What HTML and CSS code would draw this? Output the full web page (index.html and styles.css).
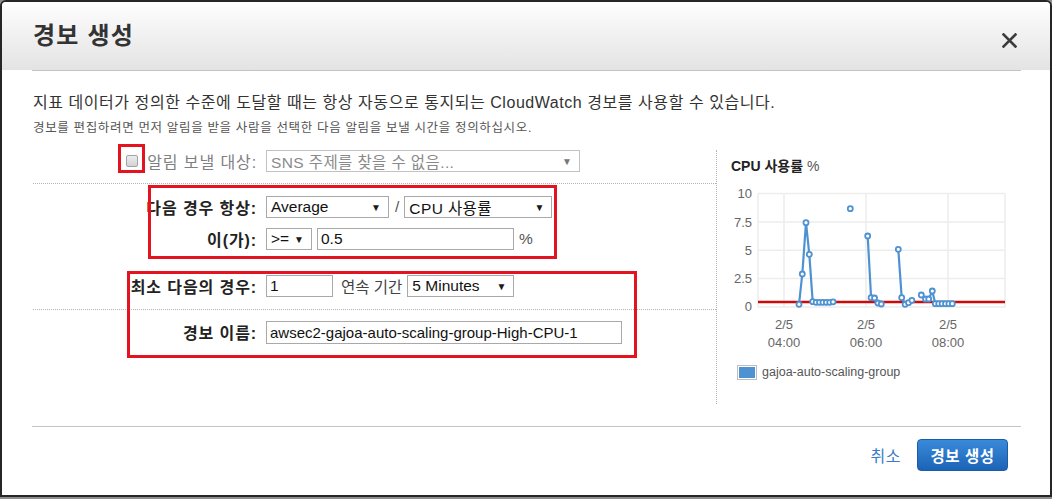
FILE: index.html
```html
<!DOCTYPE html>
<html lang="ko">
<head>
<meta charset="utf-8">
<title>경보 생성</title>
<link rel="stylesheet" href="styles.css">
</head>
<body>
<div class="modal">
  <header class="head">
    <h1 class="title">경보 생성</h1>
    <svg class="close" width="15" height="15" viewBox="0 0 15 15" aria-label="닫기"><path d="M1.5 1.5L13.5 13.5M13.5 1.5L1.5 13.5" stroke="#3c3c3c" stroke-width="2.6" stroke-linecap="square" fill="none"/></svg>
  </header>
  <div class="rule"></div>
  <div class="content">
    <p class="lead">지표 데이터가 정의한 수준에 도달할 때는 항상 자동으로 통지되는 CloudWatch 경보를 사용할 수 있습니다.</p>
    <p class="hint">경보를 편집하려면 먼저 알림을 받을 사람을 선택한 다음 알림을 보낼 시간을 정의하십시오.</p>
    <div class="main">
      <div class="form">
        <div class="sec sec1">
          <div class="row">
            <div class="lbl lbl-dis"><span class="chk"></span>알림 보낼 대상:</div>
            <div class="ctl"><span class="sel sel-dis w-sns"><span class="ko">SNS 주제를 찾을 수 없음...</span><i>▼</i></span></div>
          </div>
        </div>
        <div class="sec sec2">
          <div class="row">
            <div class="lbl">다음 경우 항상:</div>
            <div class="ctl">
              <span class="sel w-avg"><span>Average</span><i>▼</i></span>
              <span class="sep">/</span>
              <span class="sel w-cpu"><span class="ko">CPU 사용률</span><i>▼</i></span>
            </div>
          </div>
          <div class="row">
            <div class="lbl">이(가):</div>
            <div class="ctl">
              <span class="sel w-op"><span>&gt;=</span><i>▼</i></span>
              <input class="inp w-val" type="text" value="0.5">
              <span class="unit">%</span>
            </div>
          </div>
          <div class="row r4">
            <div class="lbl">최소 다음의 경우:</div>
            <div class="ctl">
              <input class="inp w-n" type="text" value="1">
              <span class="txt">연속 기간</span>
              <span class="sel w-min"><span>5 Minutes</span><i>▼</i></span>
            </div>
          </div>
        </div>
        <div class="sec sec3">
          <div class="row">
            <div class="lbl">경보 이름:</div>
            <div class="ctl"><input class="inp w-name" type="text" value="awsec2-gajoa-auto-scaling-group-High-CPU-1"></div>
          </div>
        </div>
        <div class="mark m1"></div>
        <div class="mark m2"></div>
        <div class="mark m3"></div>
      </div>
      <div class="chart">
        <div class="ctitle"><b>CPU 사용률</b> %</div>
        <svg class="plot" width="305" height="172" viewBox="0 0 305 172">
          <g stroke="#ededed" stroke-width="1.5" fill="none">
            <line x1="41" y1="8.5" x2="288" y2="8.5"/>
            <line x1="41" y1="36.9" x2="288" y2="36.9"/>
            <line x1="41" y1="65.3" x2="288" y2="65.3"/>
            <line x1="41" y1="93.6" x2="288" y2="93.6"/>
            <line x1="41" y1="122" x2="288" y2="122"/>
            <line x1="41" y1="8.5" x2="41" y2="122"/>
            <line x1="67" y1="8.5" x2="67" y2="122"/>
            <line x1="149" y1="8.5" x2="149" y2="122"/>
            <line x1="231" y1="8.5" x2="231" y2="122"/>
            <line x1="288" y1="8.5" x2="288" y2="122"/>
          </g>
          <g class="axis" text-anchor="end">
            <text x="35" y="13">10</text>
            <text x="35" y="41.5">7.5</text>
            <text x="35" y="70">5</text>
            <text x="35" y="98">2.5</text>
            <text x="35" y="126">0</text>
          </g>
          <g class="axis" text-anchor="middle">
            <text x="67" y="143.5">2/5</text>
            <text x="67" y="162">04:00</text>
            <text x="149" y="143.5">2/5</text>
            <text x="149" y="162">06:00</text>
            <text x="231" y="143.5">2/5</text>
            <text x="231" y="162">08:00</text>
          </g>
          <line x1="41" y1="117" x2="288" y2="117" stroke="#cc0a0a" stroke-width="2.5"/>
          <g stroke="#4f92d2" stroke-width="2.2" fill="none" stroke-linejoin="round">
            <polyline points="82,119.3 85.3,89 89,37.7 92.3,69.3 95.7,116.7 99.1,117.3 102.5,117.3 105.9,117.3 109.3,117.3 112.7,117.3 116.1,116.8"/>
            <polyline points="150.7,51 154.1,112.7 157.5,113 160.9,118 164.3,119"/>
            <polyline points="181.3,64.3 184.7,112.7 188.1,119.3 191.5,117.7 194.9,115.3"/>
            <polyline points="204.3,110 208.5,114 211.7,114 215.3,106 218.3,118.7 221.7,118.7 225.1,118.7 228.5,118.7 231.9,118.7 235.3,118.7"/>
          </g>
          <g fill="#fff" stroke="#4f92d2" stroke-width="1.8">
            <circle cx="82" cy="119.3" r="2.5"/><circle cx="85.3" cy="89" r="2.5"/><circle cx="89" cy="37.7" r="2.5"/><circle cx="92.3" cy="69.3" r="2.5"/><circle cx="95.7" cy="116.7" r="2.5"/><circle cx="99.1" cy="117.3" r="2.5"/><circle cx="102.5" cy="117.3" r="2.5"/><circle cx="105.9" cy="117.3" r="2.5"/><circle cx="109.3" cy="117.3" r="2.5"/><circle cx="112.7" cy="117.3" r="2.5"/><circle cx="116.1" cy="116.8" r="2.5"/>
            <circle cx="133.3" cy="23.7" r="2.5"/>
            <circle cx="150.7" cy="51" r="2.5"/><circle cx="154.1" cy="112.7" r="2.5"/><circle cx="157.5" cy="113" r="2.5"/><circle cx="160.9" cy="118" r="2.5"/><circle cx="164.3" cy="119" r="2.5"/>
            <circle cx="181.3" cy="64.3" r="2.5"/><circle cx="184.7" cy="112.7" r="2.5"/><circle cx="188.1" cy="119.3" r="2.5"/><circle cx="191.5" cy="117.7" r="2.5"/><circle cx="194.9" cy="115.3" r="2.5"/>
            <circle cx="204.3" cy="110" r="2.5"/><circle cx="208.5" cy="114" r="2.5"/><circle cx="211.7" cy="114" r="2.5"/><circle cx="215.3" cy="106" r="2.5"/><circle cx="218.3" cy="118.7" r="2.5"/><circle cx="221.7" cy="118.7" r="2.5"/><circle cx="225.1" cy="118.7" r="2.5"/><circle cx="228.5" cy="118.7" r="2.5"/><circle cx="231.9" cy="118.7" r="2.5"/><circle cx="235.3" cy="118.7" r="2.5"/>
          </g>
        </svg>
        <div class="legend"><span class="swatch"><span></span></span><span class="ltext">gajoa-auto-scaling-group</span></div>
      </div>
    </div>
  </div>
  <div class="rule rule-foot"></div>
  <footer class="foot">
    <a class="cancel" href="#">취소</a>
    <button class="btn" type="button">경보 생성</button>
  </footer>
</div>
</body>
</html>
```

FILE: styles.css
```css
* { box-sizing: border-box; }
html, body { margin: 0; padding: 0; }
body {
  width: 1052px;
  height: 499px;
  background: #8e8e8e;
  font-family: "Liberation Sans", "Noto Sans CJK KR", sans-serif;
  color: #333;
  overflow: hidden;
}
.modal {
  width: 1052px;
  height: 497px;
  background: #fff;
  border: 2px solid #262626;
  border-radius: 6px 6px 0 0;
  display: flex;
  flex-direction: column;
  overflow: hidden;
}
.head {
  height: 68px;
  flex: none;
  background: linear-gradient(#fefefe, #e3e3e3);
  display: flex;
  align-items: center;
  justify-content: space-between;
  padding: 0 33px 0 31px;
}
.title {
  margin: 0;
  font-size: 24px;
  font-weight: bold;
  letter-spacing: 1.2px;
  line-height: 28px;
  color: #333;
}
.close { margin-top: 8px; }
.rule {
  height: 1px;
  flex: none;
  background: #c4c4c4;
  margin: 0 29px 0 30px;
}
.content { padding: 0 0 0 31px; flex: none; }
.lead {
  margin: 21px 0 0;
  font-size: 16px;
  letter-spacing: 0.55px;
  line-height: 22px;
  color: #333;
}
.hint {
  margin: 6px 0 0;
  font-size: 12.5px;
  letter-spacing: 0.65px;
  line-height: 16px;
  color: #555;
}
.main {
  display: flex;
  margin-top: 8px;
  height: 260px;
}
.form {
  position: relative;
  width: 683px;
  flex: none;
}
.sec { border-bottom: 1px dotted #b4b4b4; }
.sec1 { padding: 6px 0 11px; }
.sec2 { padding: 12px 0 12px; }
.sec3 { padding-top: 11px; border-bottom: 0; }
.row {
  display: flex;
  align-items: center;
  height: 22px;
}
.row + .row { margin-top: 10px; }
.row.r4 { margin-top: 25px; }
.lbl {
  width: 224px;
  margin-right: 9px;
  display: flex;
  justify-content: flex-end;
  align-items: center;
  font-size: 16px;
  letter-spacing: 0.9px;
  font-weight: bold;
  color: #222;
  white-space: nowrap;
}
.lbl-dis { font-weight: normal; color: #808080; }
.chk {
  width: 12px;
  height: 12px;
  margin-right: 9px;
  border: 1px solid #a3a3a3;
  border-radius: 2px;
  background: linear-gradient(#ededed, #d3d3d3);
}
.ctl { display: flex; align-items: center; }
.sel {
  display: flex;
  align-items: center;
  justify-content: space-between;
  height: 22px;
  border: 1px solid #a9a9a9;
  background: #fff;
  padding: 0 7px 0 4px;
  font-size: 15.5px;
  color: #111;
  white-space: nowrap;
}
.sel i {
  font-style: normal;
  font-size: 10px;
  color: #1a1a1a;
}
.ko { letter-spacing: 0.4px; }
.sel-dis { color: #8a8a8a; border-color: #c2c2c2; }
.sel-dis i { color: #777; }
.inp {
  height: 22px;
  border: 1px solid #a9a9a9;
  padding: 0 3px;
  margin: 0;
  font-family: inherit;
  font-size: 15.5px;
  color: #111;
  background: #fff;
  outline: none;
}
.w-sns { width: 314px; }
.w-avg { width: 123px; }
.w-cpu { width: 148px; }
.w-op { width: 46px; }
.w-val { width: 197px; margin-left: 5px; }
.w-n { width: 67px; }
.w-min { width: 107px; }
.w-name { width: 356px; height: 23px; font-size: 15px; }
.sep { margin: 0 5px 0 6px; color: #555; font-size: 15.5px; }
.unit { margin-left: 5px; color: #555; font-size: 15.5px; }
.txt { margin: 0 5px 0 8px; color: #444; font-size: 15.5px; }
.mark {
  position: absolute;
  border: 3px solid #e3141f;
}
.m1 { left: 85px; top: 0; width: 27px; height: 29px; }
.m2 { left: 115px; top: 41px; width: 409px; height: 74px; }
.m3 { left: 94px; top: 127px; width: 510px; height: 87px; }
.chart {
  margin-top: 6px;
  width: 305px;
  height: 254px;
  flex: none;
  border-left: 1px dotted #b4b4b4;
}
.ctitle {
  padding: 7px 0 0 14px;
  font-size: 14px;
  line-height: 18px;
  color: #555;
}
.ctitle b { color: #222; }
.plot { display: block; margin-top: 10px; }
.axis { font-family: "Liberation Sans", sans-serif; font-size: 13px; fill: #666; }
.legend {
  display: flex;
  align-items: center;
  height: 18px;
  margin: 6px 0 0 20px;
}
.swatch {
  width: 20px;
  height: 15px;
  border: 1px solid #bdbdbd;
  padding: 1px;
  background: #fff;
  display: flex;
}
.swatch span { flex: 1; background: #4f92d2; }
.ltext { margin-left: 5px; font-size: 12.5px; color: #555; }
.rule-foot { margin-top: 22px; }
.foot {
  display: flex;
  justify-content: flex-end;
  align-items: center;
  padding: 12px 42px 0 0;
}
.cancel {
  color: #3a7bc8;
  font-size: 16px;
  letter-spacing: 0.5px;
  margin-right: 16px;
  text-decoration: none;
}
.btn {
  width: 91px;
  height: 32px;
  border: 1px solid #1b5ca8;
  border-radius: 4px;
  background: linear-gradient(#3a8ada, #1c63b6);
  color: #fff;
  font-weight: bold;
  font-size: 15.5px;
  letter-spacing: 0.5px;
  font-family: inherit;
  padding: 0;
}
```
